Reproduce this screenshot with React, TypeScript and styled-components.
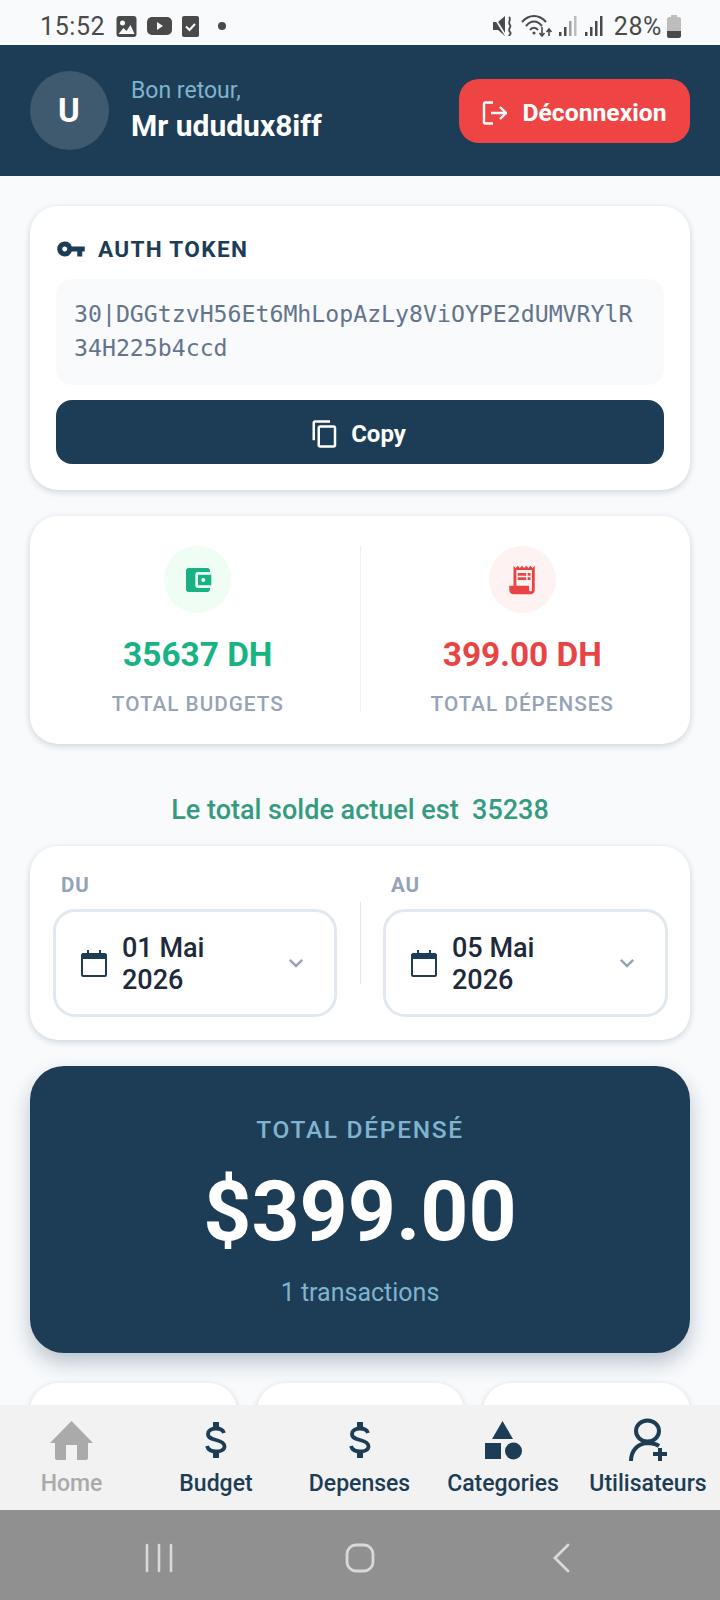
import React from 'react'
import styled, {createGlobalStyle} from 'styled-components'
import {
    MdAccountBalanceWallet,
    MdExpandMore,
    MdOutlineContentCopy,
    MdReceiptLong,
    MdVpnKey,
} from 'react-icons/md'

const NAVY = '#1c3d55'

const GlobalStyle = createGlobalStyle`
    html, body {
        margin: 0;
        padding: 0;
        background: #f8fafc;
    }
    * {
        box-sizing: border-box;
    }
`

const Screen = styled.div`
    width: 720px;
    height: 1600px;
    display: flex;
    flex-direction: column;
    overflow: hidden;
    background: #f8fafc;
    font-family: Roboto, 'Liberation Sans', sans-serif;
`

const StatusBar = styled.div`
    height: 45px;
    flex: none;
    display: flex;
    align-items: center;
    justify-content: space-between;
    padding: 7px 39px 0 40px;
    color: #4a4a4a;
`

const StatusGroup = styled.div<{$gap: number}>`
    display: flex;
    align-items: center;
    gap: ${p => p.$gap}px;
`

const StatusText = styled.span`
    font-size: 25px;
    letter-spacing: 0.6px;
`

const ClockText = styled(StatusText)`
    margin-right: 1px;
`

const PercentText = styled(StatusText)`
    margin-left: 3px;
    margin-right: -1px;
`

const Header = styled.header`
    height: 131px;
    flex: none;
    display: flex;
    align-items: center;
    justify-content: space-between;
    padding: 0 30px;
    background: ${NAVY};
`

const Profile = styled.div`
    display: flex;
    align-items: center;
    gap: 22px;
`

const Avatar = styled.div`
    width: 79px;
    height: 79px;
    padding-right: 1px;
    border-radius: 50%;
    display: flex;
    align-items: center;
    justify-content: center;
    background: #3f5a6f;
    color: #fff;
    font-size: 33px;
    font-weight: 700;
`

const Greeting = styled.div`
    color: #7fb3d0;
    font-size: 23px;
    line-height: 30px;
`

const UserName = styled.div`
    color: #fff;
    font-size: 30px;
    font-weight: 700;
    line-height: 39px;
`

const LogoutButton = styled.button`
    width: 231px;
    height: 64px;
    padding: 4px 0 0;
    border: 0;
    border-radius: 20px;
    display: flex;
    align-items: center;
    justify-content: center;
    gap: 15px;
    background: #ef4444;
    color: #fff;
    font-family: inherit;
    font-size: 24.7px;
    font-weight: 700;
`

const Content = styled.main`
    flex: 1;
    min-height: 0;
    overflow: hidden;
    display: flex;
    flex-direction: column;
    padding: 30px 30px 0;
`

const Card = styled.section`
    flex: none;
    background: #fff;
    border-radius: 28px;
    box-shadow: 0 2px 6px rgba(30, 58, 82, 0.2);
`

const TokenCard = styled(Card)`
    height: 284px;
    padding: 26px 26px 0;
    margin-bottom: 26px;
`

const TokenTitle = styled.div`
    height: 34px;
    display: flex;
    align-items: center;
    gap: 12px;
    color: ${NAVY};
    font-size: 22.6px;
    font-weight: 700;
    letter-spacing: 1.3px;
`

const TokenBox = styled.div`
    height: 106px;
    margin-top: 13px;
    padding: 18px 18px;
    border-radius: 16px;
    background: #f8fafc;
    color: #64748b;
    font-family: 'DejaVu Sans Mono', 'Liberation Mono', monospace;
    font-size: 23.2px;
    line-height: 34px;
    word-break: break-all;
`

const CopyButton = styled.button`
    width: 100%;
    height: 64px;
    margin-top: 15px;
    padding: 4px 4px 0 0;
    border: 0;
    border-radius: 16px;
    display: flex;
    align-items: center;
    justify-content: center;
    gap: 11px;
    background: ${NAVY};
    color: #fff;
    font-family: inherit;
    font-size: 24px;
    font-weight: 700;
`

const StatsCard = styled(Card)`
    height: 228px;
    padding: 30px 6px 31px;
    display: flex;
`

const StatColumn = styled.div`
    flex: 1;
    display: flex;
    flex-direction: column;
    align-items: center;
`

const StatDivider = styled.div`
    width: 1px;
    flex: none;
    background: #edf0f4;
`

const StatIcon = styled.div<{$bg: string; $fg: string}>`
    width: 67px;
    height: 67px;
    flex: none;
    border-radius: 50%;
    display: flex;
    align-items: center;
    justify-content: center;
    background: ${p => p.$bg};
    color: ${p => p.$fg};
`

const StatValue = styled.div<{$color: string}>`
    margin-top: 22px;
    color: ${p => p.$color};
    font-size: 33.4px;
    font-weight: 700;
    line-height: 40px;
`

const StatLabel = styled.div`
    margin-top: 15px;
    color: #94a3b8;
    font-size: 20.7px;
    font-weight: 500;
    line-height: 28px;
    letter-spacing: 1px;
`

const Balance = styled.div`
    flex: none;
    height: 102px;
    padding-top: 48px;
    text-align: center;
    color: #349b80;
    font-size: 27px;
    font-weight: 500;
    line-height: 36px;
    white-space: pre;
`

const RangeCard = styled(Card)`
    height: 194px;
    padding: 25px 0 0 23px;
    display: grid;
    grid-template-columns: 284px 1px 285px;
    column-gap: 22.5px;
`

const RangeField = styled.div`
    display: flex;
    flex-direction: column;
`

const RangeLabel = styled.div`
    height: 28px;
    padding-left: 8px;
    color: #94a3b8;
    font-size: 20.5px;
    font-weight: 700;
    line-height: 28px;
    letter-spacing: 1px;
`

const RangeDivider = styled.div`
    height: 82px;
    margin-top: 31px;
    background: #e2e8f0;
`

const DateInput = styled.div`
    height: 108px;
    margin-top: 10px;
    padding: 0 24px 0 25px;
    display: flex;
    align-items: center;
    gap: 15px;
    border: 3px solid #e2e8f0;
    border-radius: 22px;
    color: ${NAVY};
`

const DateText = styled.div`
    flex: 1;
    max-width: 115px;
    padding-top: 2px;
    color: #1e293b;
    font-size: 27px;
    font-weight: 500;
    line-height: 32px;
`

const ArrowSlot = styled.div`
    margin-left: auto;
    display: flex;
    color: #94a3b8;
`

const TotalCard = styled(Card)`
    height: 287px;
    margin-top: 26px;
    padding-top: 48px;
    border-radius: 34px;
    display: flex;
    flex-direction: column;
    align-items: center;
    background: ${NAVY};
    box-shadow: 0 10px 20px rgba(30, 58, 82, 0.28);
`

const TotalLabel = styled.div`
    color: #7fb3d0;
    font-size: 24.5px;
    font-weight: 500;
    line-height: 32px;
    letter-spacing: 1.7px;
`

const TotalAmount = styled.div`
    margin-top: 19px;
    color: #fff;
    font-size: 84px;
    font-weight: 700;
    line-height: 94px;
`

const TotalCount = styled.div`
    margin-top: 17px;
    color: #7fb3d0;
    font-size: 25px;
    line-height: 34px;
`

const MiniRow = styled.div`
    flex: none;
    margin-top: 30px;
    display: grid;
    grid-template-columns: repeat(3, 207px);
    justify-content: space-between;
`

const MiniCard = styled(Card)`
    height: 120px;
`

const Nav = styled.nav`
    height: 105px;
    flex: none;
    display: grid;
    grid-template-columns: 143px 146px 141px 146px 144px;
    background: #f2f2f2;
`

const NavItem = styled.div<{$active?: boolean}>`
    display: flex;
    flex-direction: column;
    align-items: center;
    padding-top: 13px;
    color: ${p => (p.$active ? '#aaaaaa' : NAVY)};
    font-size: 23px;
    font-weight: 500;
    white-space: nowrap;
`

const NavIconSlot = styled.div`
    height: 44px;
    display: flex;
    align-items: center;
    justify-content: center;
`

const NavLabel = styled.div`
    margin-top: 9px;
    line-height: 26px;
`

const SystemBar = styled.div`
    height: 90px;
    flex: none;
    display: grid;
    grid-template-columns: repeat(3, 201px);
    justify-content: center;
    align-items: center;
    justify-items: center;
    padding-top: 5px;
    background: #909090;
    color: #d9d9d9;
`

const HomeIcon = () => (
    <svg width="43" height="39" viewBox="0 0 43 39" fill="currentColor">
        <path d="M21.500 0 43 22H38V37C38 38 37 39 36 39H27V24H16V39H7C6 39 5 38 5 37V22H0Z" />
    </svg>
)

const DollarIcon = () => (
    <svg width="22" height="36" viewBox="0 0 22 36" fill="none" stroke="currentColor">
        <path d="M19 11C18 8 15 6.500 11 6.500 6 6.500 3 9 3 12 3 16 7 17 11 18 15 19 19.500 20.500 19.500 24.500 19.500 27.500 16 29.500 11 29.500 6 29.500 3 27.500 2 24" strokeWidth="3.800" />
        <path d="M11 0V7M11 29V36" strokeWidth="6" />
    </svg>
)

const ShapesIcon = () => (
    <svg width="37" height="39" viewBox="0 0 37 39" fill="currentColor">
        <path d="M17.500 0 28 18H7Z" />
        <rect x="0" y="22" width="16" height="16" />
        <circle cx="28.500" cy="30" r="8.500" />
    </svg>
)

const UserAddIcon = () => (
    <svg width="40" height="44" viewBox="0 0 40 44" fill="none" stroke="currentColor" strokeWidth="4">
        <ellipse cx="19.500" cy="13" rx="11.500" ry="10.500" />
        <path d="M3 43C3 33 9 26 19 25 24 25 28 26 31 28" />
        <path d="M32 30V43M25 36H39" />
    </svg>
)

const CalendarIcon = () => (
    <svg width="26" height="27" viewBox="0 0 26 27" fill="currentColor">
        <path d="M2 3H6V0H8V3H18V0H20V3H24C25 3 26 4 26 5V25C26 26 25 27 24 27H2C1 27 0 26 0 25V5C0 4 1 3 2 3ZM2 9V25H24V9Z" />
    </svg>
)

const LogoutIcon = () => (
    <svg width="25" height="24" viewBox="0 0 25 24" fill="none" stroke="currentColor" strokeWidth="2.400">
        <path d="M11 1.500H3.500C2.500 1.500 2 2 2 3V21C2 22 2.500 22.500 3.500 22.500H11" />
        <path d="M9 12H24M18 6 24 12 18 18" />
    </svg>
)

const SpeakerMuteIcon = () => (
    <svg width="22" height="24" viewBox="0 0 22 24" fill="#4a4a4a">
        <path d="M0 8H5L12 2V22L5 16H0Z" />
        <path d="M1 3 13 22" stroke="#f8fafc" strokeWidth="1.600" />
        <path d="M16 3C19 6 14 8 17 11 19 13 14 15 17 18 19 20 16 21 16 22" fill="none" stroke="#4a4a4a" strokeWidth="1.800" />
    </svg>
)

const WifiIcon = () => (
    <svg width="32" height="24" viewBox="0 0 32 24" fill="none" stroke="#4a4a4a" strokeWidth="2">
        <path d="M1 8C8 0 18 0 25 8M5 12C10 6 16 6 21 12M9 16C11 13 15 13 17 16" />
        <circle cx="13" cy="19" r="1.500" fill="#4a4a4a" stroke="none" />
        <path d="M21 13V22M18.500 19 21 22 23.500 19M28 22V15M25.500 18 28 15 30.500 18" strokeWidth="1.600" />
    </svg>
)

const SignalIcon = ({$full}: {$full?: boolean}) => (
    <svg width="20" height="20" viewBox="0 0 20 20" fill="#4a4a4a">
        <rect x="0" y="16" width="2.500" height="4" />
        <rect x="5" y="11" width="2.500" height="9" />
        <rect x="10" y="5" width="2.500" height="15" opacity={$full ? 1 : 0.5} />
        <rect x="15" y="0" width="2.500" height="20" opacity={$full ? 1 : 0.35} />
    </svg>
)

const BatteryIcon = () => (
    <svg width="14" height="23" viewBox="0 0 14 23">
        <path d="M4 0H10V2H12C13 2 14 3 14 4V17H0V4C0 3 1 2 2 2H4Z" fill="#bdbdbd" />
        <path d="M0 16H14V21C14 22 13 23 12 23H2C1 23 0 22 0 21Z" fill="#4a4a4a" />
    </svg>
)

const ImageNotif = () => (
    <svg width="21" height="21" viewBox="0 0 20 21" fill="#4a4a4a">
        <path d="M3 0H17C19 0 20 1 20 3V18C20 20 19 21 17 21H3C1 21 0 20 0 18V3C0 1 1 0 3 0Z" />
        <circle cx="6" cy="7" r="2.500" fill="#f8fafc" />
        <path d="M2 18 7 12 10 15 14 9 18 18Z" fill="#f8fafc" />
    </svg>
)

const VideoNotif = () => (
    <svg width="25" height="18" viewBox="0 0 25 18" fill="#4a4a4a">
        <rect width="25" height="18" rx="5" />
        <path d="M10 5 16 9 10 13Z" fill="#f8fafc" />
    </svg>
)

const CheckNotif = () => (
    <svg width="17" height="21" viewBox="0 0 17 21" fill="#4a4a4a">
        <rect width="17" height="21" rx="2" />
        <path d="M4 10.500 7.500 14 13 8" fill="none" stroke="#f8fafc" strokeWidth="2" />
    </svg>
)

const Dot = styled.span`
    width: 8px;
    height: 8px;
    margin-left: 9px;
    border-radius: 50%;
    background: #4a4a4a;
`

const MenuBars = () => (
    <svg width="28" height="30" viewBox="0 0 28 30" fill="none" stroke="currentColor" strokeWidth="2.600" strokeLinecap="round">
        <path d="M2 2V28M14 2V28M26 2V28" />
    </svg>
)

const HomeKey = () => (
    <svg width="30" height="30" viewBox="0 0 30 30" fill="none" stroke="currentColor" strokeWidth="2.800">
        <rect x="2" y="2" width="26" height="26" rx="9" />
    </svg>
)

const BackKey = () => (
    <svg width="18" height="30" viewBox="0 0 18 30" fill="none" stroke="currentColor" strokeWidth="2.800" strokeLinecap="round">
        <path d="M16 2 3 15 16 28" />
    </svg>
)

const navItems = [
    {label: 'Home', icon: <HomeIcon />, active: true},
    {label: 'Budget', icon: <DollarIcon />},
    {label: 'Depenses', icon: <DollarIcon />},
    {label: 'Categories', icon: <ShapesIcon />},
    {label: 'Utilisateurs', icon: <UserAddIcon />},
]

const ranges = [
    {label: 'DU', date: '01 Mai 2026'},
    {label: 'AU', date: '05 Mai 2026'},
]

function DateRange({label, date}: {label: string; date: string}) {
    return (
        <RangeField>
            <RangeLabel>{label}</RangeLabel>
            <DateInput>
                <CalendarIcon />
                <DateText>{date}</DateText>
                <ArrowSlot>
                    <MdExpandMore size={28} />
                </ArrowSlot>
            </DateInput>
        </RangeField>
    )
}

export default function App() {
    return (
        <Screen>
            <GlobalStyle />
            <StatusBar>
                <StatusGroup $gap={10}>
                    <ClockText>15:52</ClockText>
                    <ImageNotif />
                    <VideoNotif />
                    <CheckNotif />
                    <Dot />
                </StatusGroup>
                <StatusGroup $gap={6}>
                    <SpeakerMuteIcon />
                    <WifiIcon />
                    <SignalIcon />
                    <SignalIcon $full />
                    <PercentText>28%</PercentText>
                    <BatteryIcon />
                </StatusGroup>
            </StatusBar>
            <Header>
                <Profile>
                    <Avatar>U</Avatar>
                    <div>
                        <Greeting>Bon retour,</Greeting>
                        <UserName>Mr ududux8iff</UserName>
                    </div>
                </Profile>
                <LogoutButton>
                    <LogoutIcon />
                    Déconnexion
                </LogoutButton>
            </Header>
            <Content>
                <TokenCard>
                    <TokenTitle>
                        <MdVpnKey size={30} />
                        AUTH TOKEN
                    </TokenTitle>
                    <TokenBox>30|DGGtzvH56Et6MhLopAzLy8ViOYPE2dUMVRYlR34H225b4ccd</TokenBox>
                    <CopyButton>
                        <MdOutlineContentCopy size={30} />
                        Copy
                    </CopyButton>
                </TokenCard>
                <StatsCard>
                    <StatColumn>
                        <StatIcon $bg="#f0fdf4" $fg="#18b384">
                            <MdAccountBalanceWallet size={32} />
                        </StatIcon>
                        <StatValue $color="#18b384">35637 DH</StatValue>
                        <StatLabel>TOTAL BUDGETS</StatLabel>
                    </StatColumn>
                    <StatDivider />
                    <StatColumn>
                        <StatIcon $bg="#fef2f2" $fg="#e94444">
                            <MdReceiptLong size={34} />
                        </StatIcon>
                        <StatValue $color="#e94444">399.00 DH</StatValue>
                        <StatLabel>TOTAL DÉPENSES</StatLabel>
                    </StatColumn>
                </StatsCard>
                <Balance>Le total solde actuel est  35238</Balance>
                <RangeCard>
                    <DateRange {...ranges[0]} />
                    <RangeDivider />
                    <DateRange {...ranges[1]} />
                </RangeCard>
                <TotalCard>
                    <TotalLabel>TOTAL DÉPENSÉ</TotalLabel>
                    <TotalAmount>$399.00</TotalAmount>
                    <TotalCount>1 transactions</TotalCount>
                </TotalCard>
                <MiniRow>
                    <MiniCard />
                    <MiniCard />
                    <MiniCard />
                </MiniRow>
            </Content>
            <Nav>
                {navItems.map(item => (
                    <NavItem key={item.label} $active={item.active}>
                        <NavIconSlot>{item.icon}</NavIconSlot>
                        <NavLabel>{item.label}</NavLabel>
                    </NavItem>
                ))}
            </Nav>
            <SystemBar>
                <MenuBars />
                <HomeKey />
                <BackKey />
            </SystemBar>
        </Screen>
    )
}
